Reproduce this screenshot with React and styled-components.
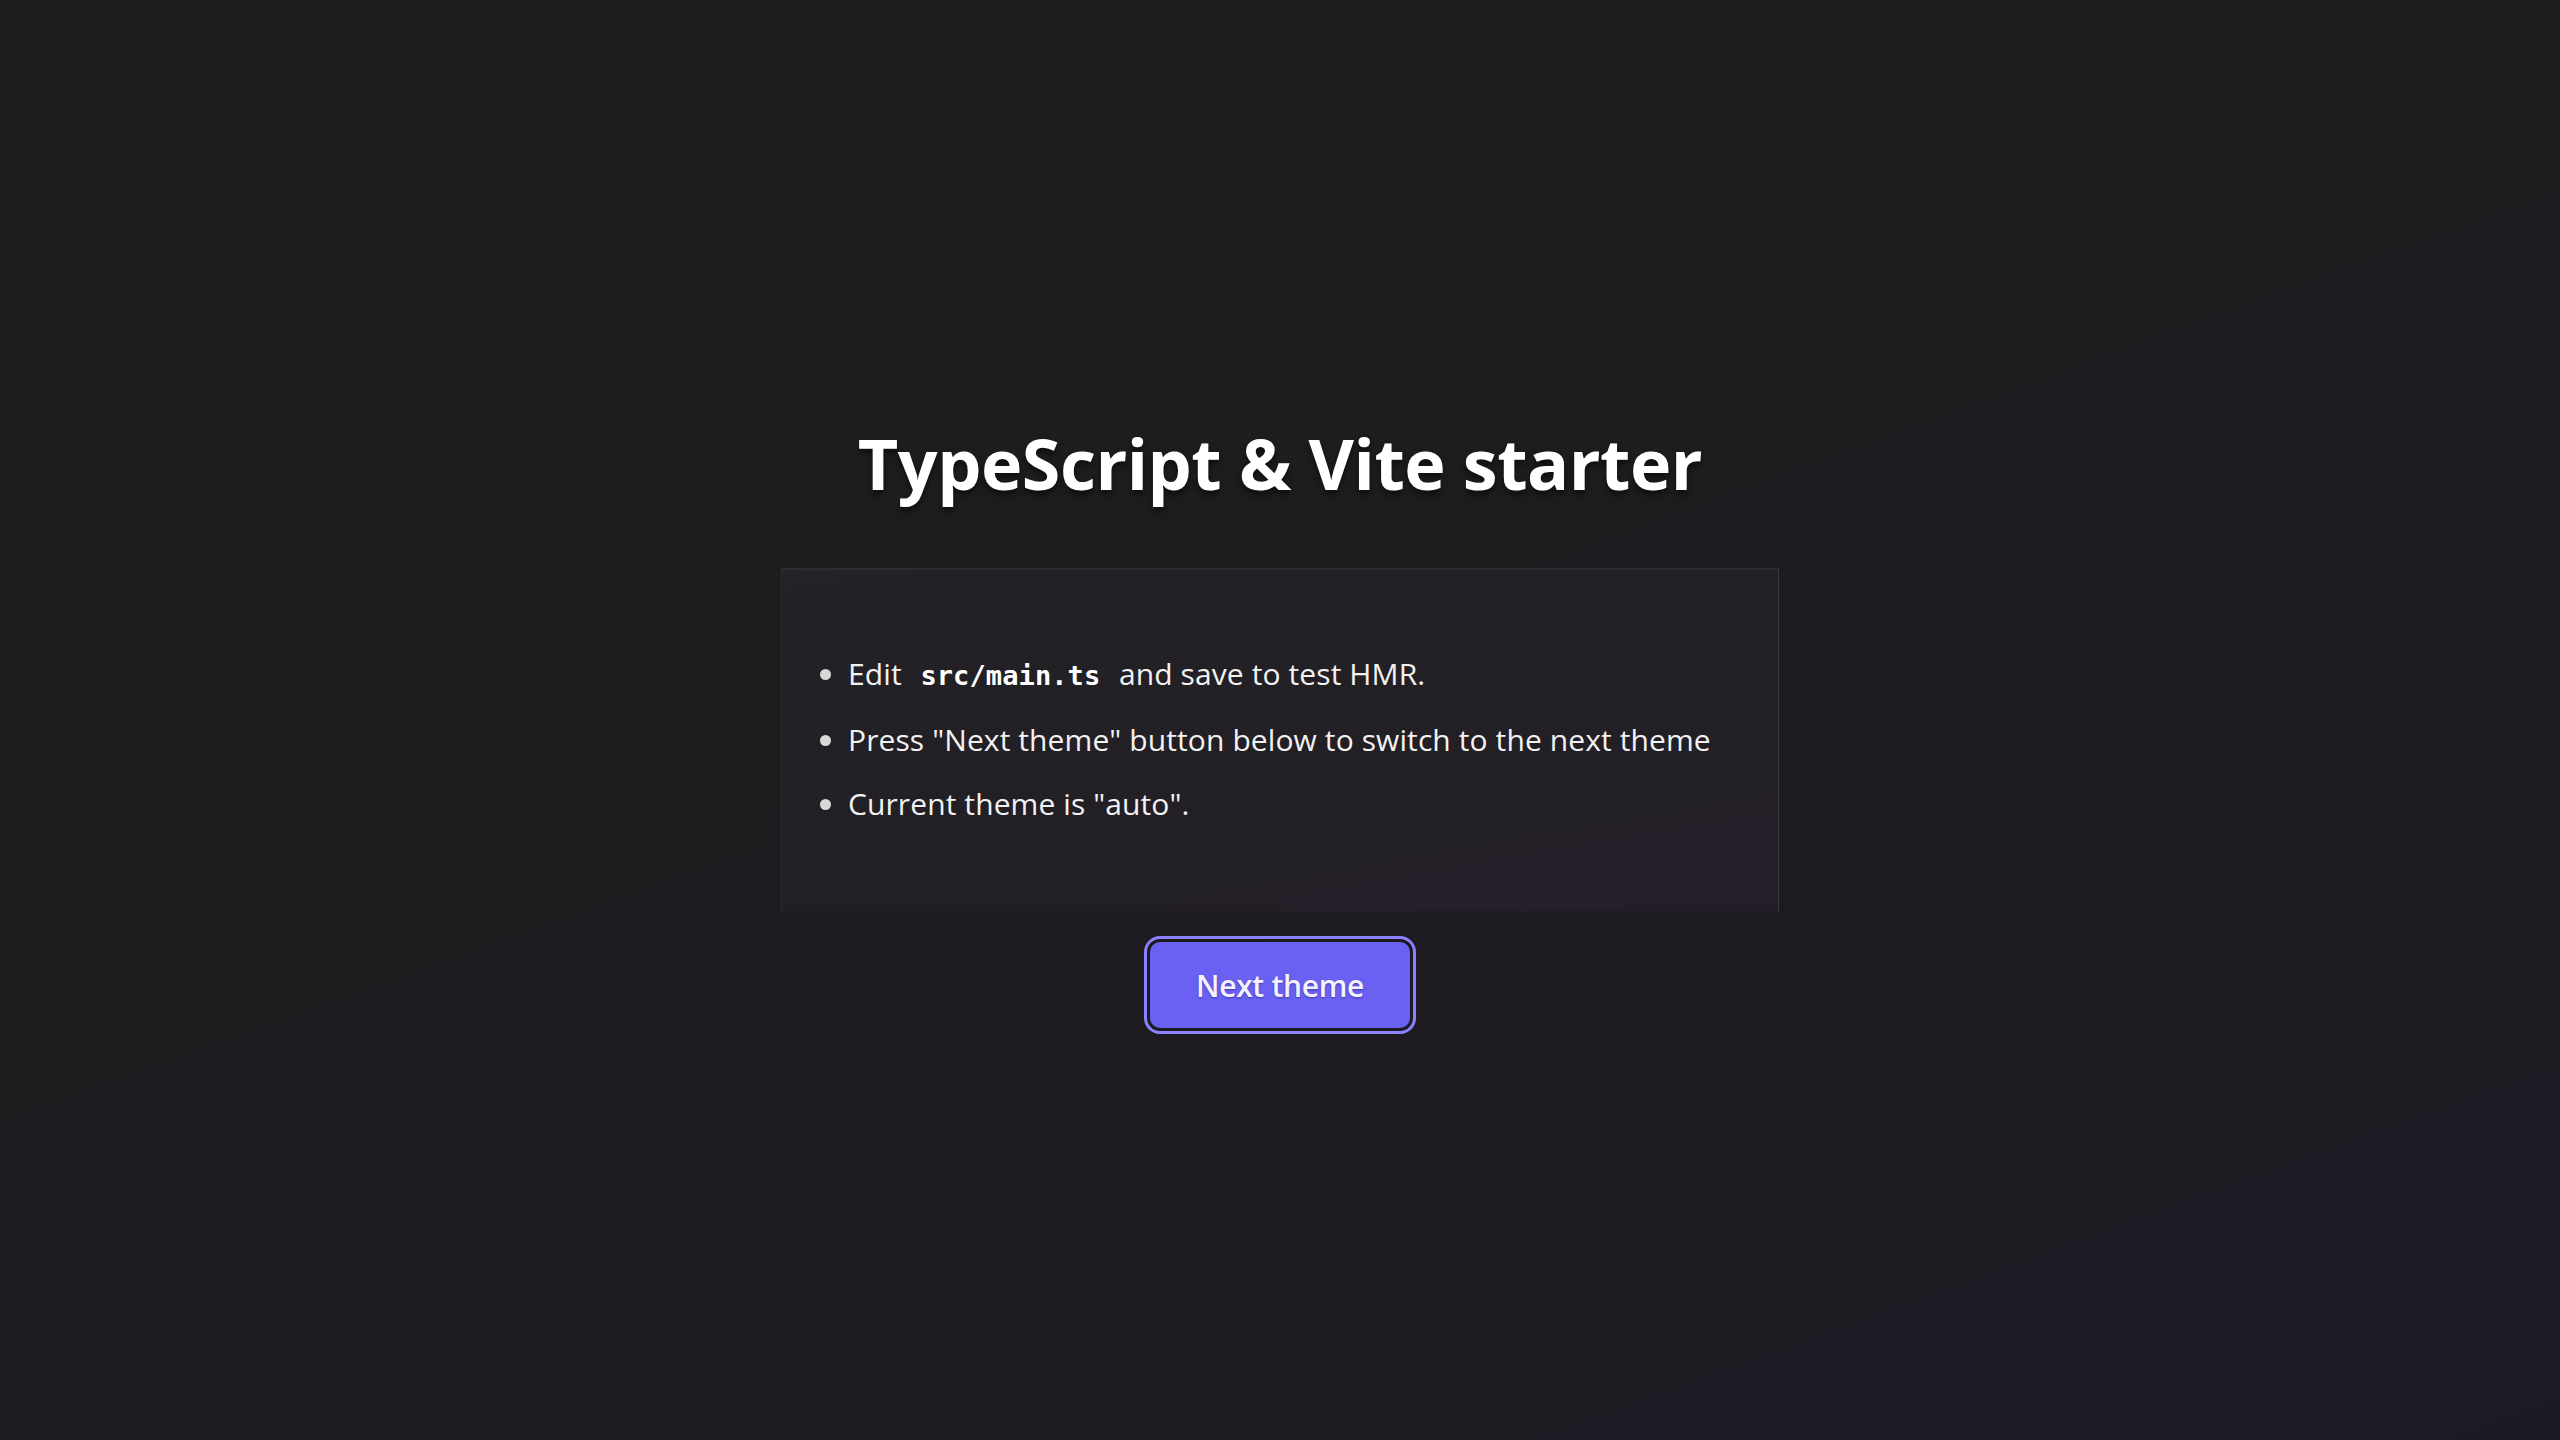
import React from 'react';
import styled, { createGlobalStyle } from 'styled-components';

const GlobalStyle = createGlobalStyle`
	html,
	body {
		margin: 0;
		padding: 0;
		height: 100%;
	}

	body {
		background: linear-gradient(160deg, #1e1e1e 0%, #1d1c1f 45%, #1e1a25 100%);
		color: rgba(255, 255, 255, 0.9);
		font-family: 'Open Sans', 'Noto Sans', sans-serif;
	}

	#root {
		min-height: 100%;
	}
`;

const Page = styled.main`
	align-items: center;
	box-sizing: border-box;
	display: flex;
	flex-direction: column;
	min-height: 1440px;
	padding-top: 413px;
`;

const Title = styled.h1`
	color: #ffffff;
	font-size: 70px;
	font-weight: 700;
	letter-spacing: -0.5px;
	line-height: 100px;
	margin: 0 0 55px;
	text-shadow: 0 4px 6px rgba(0, 0, 0, 0.55);
`;

const Card = styled.section`
	background: linear-gradient(170deg, #232226 0%, #221f25 60%, #241e29 100%);
	border-right: 1px solid #3a383f;
	border-top: 2px solid #2c2b30;
	border-left: 1px solid #2a292e;
	box-sizing: border-box;
	height: 343px;
	width: 998px;
`;

const List = styled.ul`
	margin: 0;
	padding: 72px 0 0 66px;
`;

const Item = styled.li`
	color: #f2f2f2;
	font-size: 30px;
	letter-spacing: 0.1px;
	line-height: 64px;

	&::marker {
		color: #d8d8d8;
		font-size: 30px;
	}
`;

const Code = styled.code`
	color: #ffffff;
	font-family: 'DejaVu Sans Mono', 'Liberation Mono', monospace;
	font-size: 27px;
	font-weight: 700;
	padding: 0 0.4em;
`;

const Button = styled.button`
	background: #6a61f2;
	border: none;
	border-radius: 10px;
	color: #f4f2ff;
	cursor: pointer;
	font-family: 'Open Sans', 'Noto Sans', sans-serif;
	font-size: 30px;
	font-weight: 600;
	height: 86px;
	letter-spacing: -0.3px;
	margin-top: 31px;
	outline: 3px solid #8a81ff;
	outline-offset: 3px;
	text-shadow: 0 1px 2px rgba(40, 30, 120, 0.6);
	width: 260px;
`;

const items = [
	<>
		Edit <Code>src/main.ts</Code> and save to test HMR.
	</>,
	<>Press "Next theme" button below to switch to the next theme</>,
	<>Current theme is "auto".</>
];

const App = () => (
	<>
		<GlobalStyle />
		<Page>
			<Title>TypeScript &amp; Vite starter</Title>
			<Card>
				<List>
					{items.map((content, i) => (
						<Item key={i}>{content}</Item>
					))}
				</List>
			</Card>
			<Button type="button">Next theme</Button>
		</Page>
	</>
);

export default App;
